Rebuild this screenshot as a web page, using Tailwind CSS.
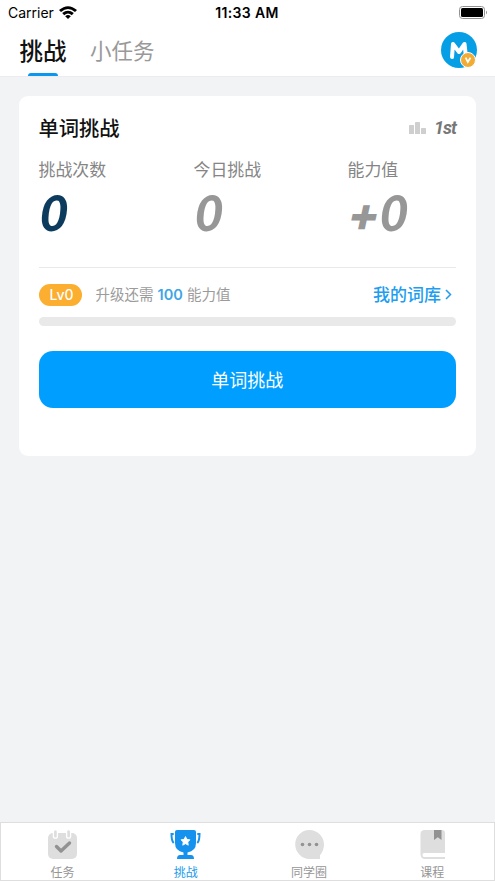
<!DOCTYPE html>
<html lang="zh-CN">
<head>
<meta charset="utf-8">
<title>单词挑战</title>
<script src="https://cdn.jsdelivr.net/npm/@tailwindcss/browser@4"></script>
</head>
<body class="font-['Inter','Noto_Sans_CJK_SC',sans-serif]">
<div class="flex h-[881px] w-[495px] flex-col overflow-hidden bg-[#f2f3f5]">
  <header class="h-[77px] shrink-0 border-b border-[#ececee] bg-white">
    <div class="grid h-[26px] grid-cols-3 items-center pl-2 pr-[7px] text-black">
      <div class="flex items-center gap-[5px]">
        <span class="text-[14px] leading-[26px]">Carrier</span>
        <svg class="mb-[2px] h-[13px] w-[18px]" viewBox="0 0 18 13"><path d="M0 4Q9-3.6 18 4L16 6Q9 .2 2 6Z"/><path d="M3.2 7.1Q9 2.5 14.8 7.1L12.8 9.2Q9 6 5.2 9.2Z"/><path d="M6.2 10.2Q9 8 11.8 10.2L9 13Z"/></svg>
      </div>
      <span class="-ml-[2px] text-center text-[14px] font-semibold leading-[26px] tracking-[0.35px] whitespace-nowrap">11:33 AM</span>
      <svg class="mb-[2px] h-[13px] w-[29px] justify-self-end" viewBox="0 0 29 13"><rect x=".5" y=".5" width="25" height="12" rx="3" fill="#fff" stroke="#929292"/><rect x="2" y="2" width="22" height="9" rx="1.5"/><path d="M27 4.5Q29 6.5 27 8.5Z" fill="#929292"/></svg>
    </div>
    <div class="flex h-[50px] justify-between pl-5 pr-[18px]">
      <nav class="flex">
        <div class="flex w-[46px] flex-col items-center justify-between">
          <span class="h-[46px] text-[23.5px] font-medium leading-[51px] text-[#111] whitespace-nowrap">挑战</span>
          <span class="h-[3px] w-[30px] rounded-t-full bg-[#0b96f0]"></span>
        </div>
        <span class="ml-[24px] text-[21.5px] leading-[51px] text-[#999]">小任务</span>
      </nav>
      <div class="relative mt-[6px] h-9 w-9 rounded-full bg-[#069fe6]">
        <svg class="h-9 w-9" viewBox="0 0 36 36"><path d="M11 25L12 12L18 20L23.5 12L25 25" fill="none" stroke="#fff" stroke-width="4" stroke-linecap="round" stroke-linejoin="round"/></svg>
        <svg class="absolute left-[19px] top-[20px] h-4 w-4" viewBox="0 0 16 16"><circle cx="8" cy="8" r="7.5" fill="#f2ab35" stroke="#fff"/><path d="M5.6 5.7L7.8 10L10.5 5.7" fill="none" stroke="#fff" stroke-width="1.7"/></svg>
      </div>
    </div>
  </header>

  <main class="flex-1 px-[19px] pt-[19px]">
    <section class="h-[360px] rounded-[9px] bg-white pl-[19.5px] pr-5 pt-[17px]">
      <div class="flex h-[30px] items-center justify-between">
        <h1 class="pt-px text-[20.3px] font-medium leading-[32px] text-[#111]">单词挑战</h1>
        <div class="flex items-center gap-[8px]">
          <svg class="h-3 w-[17px]" viewBox="0 0 17 12" fill="#cfcfcf"><rect x="0" y="3" width="5" height="9" rx=".5"/><rect x="6" width="5" height="12" rx=".5"/><rect x="12" y="6" width="5" height="6" rx=".5"/></svg>
          <span class="w-[22px] font-['Roboto'] text-[18px] font-bold italic leading-[30px] tracking-[-1px] text-[#777]">1st</span>
        </div>
      </div>
      <div class="grid grid-cols-[155px_154px_1fr] pt-[15px]">
        <div><div class="text-[16.9px] leading-6 text-[#858585]">挑战次数</div><div class="h-[64px] -skew-x-3 pl-px font-['Lato'] text-[49px] font-black italic leading-[60px] text-[#0d3b5e]">0</div></div>
        <div><div class="text-[16.9px] leading-6 text-[#858585]">今日挑战</div><div class="h-[64px] -skew-x-3 pl-px font-['Lato'] text-[49px] font-black italic leading-[60px] text-[#979797]">0</div></div>
        <div><div class="text-[16.9px] leading-6 text-[#858585]">能力值</div><div class="flex h-[64px] -skew-x-3 font-['Lato'] text-[49px] font-black italic leading-[60px] text-[#979797]"><span class="w-[32px] pt-[2px] font-['Inter'] text-[47px] font-extrabold">+</span><span>0</span></div></div>
      </div>
      <div class="mt-[21px] flex h-[50px] items-center border-t border-[#e9e9e9] pt-[4px]">
        <span class="flex h-[22px] w-[43px] items-center justify-center rounded-full bg-[#fbae2f] pl-[3px] text-[14px] font-medium text-white">Lv0</span>
        <span class="ml-[14px] text-[14.5px] leading-6 text-[#9b9b9b]">升级还需 <span class="font-semibold text-[#3da5e7]">100</span> 能力值</span>
        <a class="ml-auto flex items-center text-[17px] font-medium leading-6 text-[#209df0]">我的词库<svg class="ml-[4px] mr-[4px] h-[11px] w-[7px]" viewBox="0 0 7 11"><path d="M1 1L5.5 5.5L1 10" fill="none" stroke="#209df0" stroke-width="1.5"/></svg></a>
      </div>
      <div class="h-[9px] rounded-full bg-[#e9e9e9]"></div>
      <button class="mt-[25px] block h-[57px] w-full rounded-[14px] bg-[#009fff] text-[18px] leading-[59px] text-white">单词挑战</button>
    </section>
  </main>

  <footer class="grid h-[59px] shrink-0 grid-cols-4 border border-[#dedede] bg-white text-[12px] leading-4 text-[#969696]">
    <div class="flex flex-col items-center pt-[6px]">
      <svg class="h-[31px] w-[31px]" viewBox="0 0 31 31"><rect x="1" y="4" width="29" height="26" rx="5" fill="#dedede"/><g fill="#dedede" stroke="#fff" stroke-width="1.3"><rect x="6.4" y=".7" width="4" height="8.5" rx="2"/><rect x="19.6" y=".7" width="4" height="8.5" rx="2"/></g><path d="M9.5 17.5L14 22L22.5 14" fill="none" stroke="#929292" stroke-width="3.4" stroke-linecap="round" stroke-linejoin="round"/></svg>
      <span class="mt-[4.5px]">任务</span>
    </div>
    <div class="flex flex-col items-center pt-[6px] text-[#209be9]">
      <svg class="h-[31px] w-[31px]" viewBox="0 0 31 31" fill="#1492ed"><path d="M5 3Q5 1 7 1H24Q26 1 26 3V14Q26 22 17.5 23.5V26H21Q24 26 24 30H7Q7 26 10 26H13.5V23.5Q5 22 5 14Z"/><path d="M3.7 5H1.5Q1.5 12 3.7 14M27.3 5H29.5Q29.5 12 27.3 14" fill="none" stroke="#1492ed" stroke-width="2"/><path d="M15.5 7.5L16.9 10.3L20 10.8L17.8 13L18.3 16.2L15.5 14.7L12.7 16.2L13.2 13L11 10.8L14.1 10.3Z" fill="#fff" stroke="#fff" stroke-width=".8" stroke-linejoin="round"/></svg>
      <span class="mt-[4.5px]">挑战</span>
    </div>
    <div class="flex flex-col items-center pt-[6px]">
      <svg class="h-[31px] w-[31px]" viewBox="0 0 31 31"><path d="M15.5 1C7.5 1 1.2 7.4 1.2 15.3S7.5 30 15.5 30H26V26.2Q30 21.5 30 15.5C30 7.5 23.5 1 15.5 1Z" fill="#dedede"/><g fill="#929292"><circle cx="8.5" cy="15.5" r="1.8"/><circle cx="15.5" cy="15.5" r="1.8"/><circle cx="22.5" cy="15.5" r="1.8"/></g></svg>
      <span class="mt-[4.5px]">同学圈</span>
    </div>
    <div class="flex flex-col items-center pt-[6px]">
      <svg class="h-[31px] w-[31px]" viewBox="0 0 31 31"><path d="M8 1H25Q28 1 28 4V24H7Q5.5 24 5.5 26T7 28H28V30H8Q3.5 30 3.5 25V5Q3.5 1 8 1Z" fill="#dedede"/><path d="M17 1H24.5V11L20.8 8.3L17 11Z" fill="#929292"/></svg>
      <span class="mt-[4.5px]">课程</span>
    </div>
  </footer>
</div>
</body>
</html>
